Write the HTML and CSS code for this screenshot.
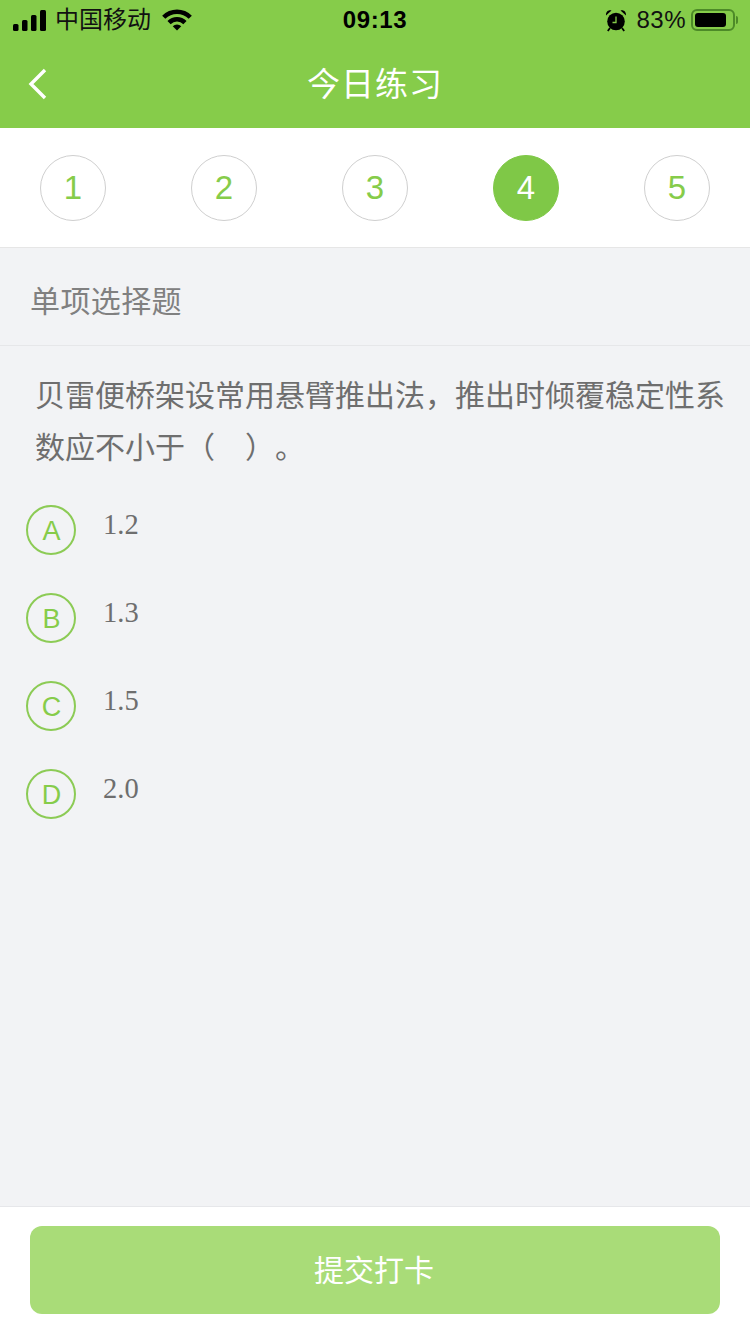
FILE: index.html
```
<!DOCTYPE html>
<html lang="zh">
<head>
<meta charset="utf-8">
<title>今日练习</title>
<link rel="stylesheet" href="styles.css">
</head>
<body>
<div class="page">
  <header class="top">
    <div class="status">
      <div class="status-left">
        <svg class="signal" width="33" height="21" viewBox="0 0 33 21"><rect x="0" y="14" width="5.500" height="7" rx="1.500"/><rect x="9" y="10" width="5.500" height="11" rx="1.500"/><rect x="18" y="5" width="5.500" height="16" rx="1.500"/><rect x="27" y="0" width="6" height="21" rx="1.500"/></svg>
        <span class="carrier">中国移动</span>
        <svg class="wifi" width="30" height="22" viewBox="0 0 30 22"><path d="M.15 6.650A21 21 0 0 1 29.850 6.650L26.670 9.830A16.500 16.500 0 0 0 3.330 9.830Z"/><path d="M5.450 11.950A13.500 13.500 0 0 1 24.550 11.950L21.360 15.140A9 9 0 0 0 8.640 15.140Z"/><path d="M10.760 17.260A6 6 0 0 1 19.240 17.260L15 21.500Z"/></svg>
      </div>
      <span class="time">09:13</span>
      <div class="status-right">
        <svg class="alarm" width="22" height="23" viewBox="0 0 22 23"><circle cx="11" cy="12.500" r="8.800"/><path d="M1 6.500C.8 3 3 .6 6.500 1.500zM21 6.500C21.200 3 19 .6 15.500 1.500z"/><path d="M5 19l-2.200 3M17 19l2.200 3" stroke="#000" stroke-width="1.800" fill="none"/><path d="M11 7.500v6H7.500" stroke="#86cc4a" stroke-width="1.300" fill="none"/></svg>
        <span class="percent">83%</span>
        <div class="battery"><div class="battery-fill"></div></div>
        <div class="battery-cap"></div>
      </div>
    </div>
    <div class="nav">
      <svg class="back" width="20" height="32" viewBox="0 0 20 32"><path d="M17 2L3 16l14 14" fill="none" stroke="#fff" stroke-width="3.400"/></svg>
      <h1 class="title">今日练习</h1>
    </div>
  </header>

  <nav class="steps">
    <span class="step">1</span>
    <span class="step">2</span>
    <span class="step">3</span>
    <span class="step step-on">4</span>
    <span class="step">5</span>
  </nav>

  <main class="body">
    <div class="kind">单项选择题</div>
    <p class="question">贝雷便桥架设常用悬臂推出法，推出时倾覆稳定性系数应不小于（　）。</p>
    <ul class="options">
      <li class="option"><span class="letter">A</span><span class="value">1.2</span></li>
      <li class="option"><span class="letter">B</span><span class="value">1.3</span></li>
      <li class="option"><span class="letter">C</span><span class="value">1.5</span></li>
      <li class="option"><span class="letter">D</span><span class="value">2.0</span></li>
    </ul>
  </main>

  <footer class="foot">
    <button class="submit" type="button">提交打卡</button>
  </footer>
</div>
</body>
</html>
```
FILE: styles.css
```
* { box-sizing: border-box; }
html, body { margin: 0; padding: 0; }
body { font-family: "Liberation Sans", "Noto Sans CJK SC", sans-serif; }
.page { width: 750px; height: 1334px; display: flex; flex-direction: column; background: #f2f3f5; overflow: hidden; }

.top { height: 128px; background: #86cc4a; display: flex; flex-direction: column; flex: none; }
.status { height: 40px; padding: 0 12px 0 13px; display: grid; grid-template-columns: 1fr auto 1fr; align-items: center; color: #000; }
.status-left { display: flex; align-items: center; }
.status-right { display: flex; align-items: center; justify-content: flex-end; }
.signal { flex: none; }
.carrier { font-size: 24px; line-height: 40px; margin-left: 9px; color: #111; }
.wifi { margin-left: 11px; }
.time { font-size: 24px; font-weight: 700; letter-spacing: 0.6px; margin-left: -1px; }
.alarm { margin-right: 9px; }
.percent { font-size: 24px; letter-spacing: 0.5px; color: #111; }
.battery { width: 44px; height: 22px; border: 2px solid #4d8a28; border-radius: 6px; padding: 2px; margin-left: 5px; }
.battery-fill { width: 31px; height: 14px; background: #000; border-radius: 3px; }
.battery-cap { width: 2px; height: 8px; margin-left: 1px; background: #4d8a28; border-radius: 0 2px 2px 0; }

.nav { flex: 1; display: flex; align-items: center; justify-content: center; position: relative; padding-bottom: 4px; }
.back { position: absolute; left: 28px; top: 28px; }
.title { margin: 0; font-size: 33px; font-weight: 400; color: #fff; letter-spacing: 1px; }

.steps { height: 120px; flex: none; background: #fff; border-bottom: 1px solid #e6e6e6; padding: 0 40px; display: flex; align-items: center; justify-content: space-between; }
.step { width: 66px; height: 66px; border-radius: 50%; border: 1px solid #cfcfcf; color: #86cc4a; font-size: 33px; display: flex; align-items: center; justify-content: center; }
.step-on { background: #7fc847; border-color: #7fc847; color: #fff; }

.body { flex: 1; }
.kind { height: 98px; padding: 5px 30px 0; border-bottom: 1px solid #e6e7e9; display: flex; align-items: center; font-size: 30px; letter-spacing: 0.4px; color: #808080; }
.question { margin: 0; padding: 24px 20px 0 35px; font-size: 30px; line-height: 52px; color: #6e6e6e; text-spacing-trim: space-all; }
.options { list-style: none; margin: 0; padding: 31px 0 0 26px; display: flex; flex-direction: column; gap: 38px; }
.option { display: flex; height: 50px; }
.letter { width: 50px; height: 50px; border: 2px solid #8ccb55; border-radius: 50%; color: #86cc4a; font-size: 27px; padding: 3px 0 0 1px; display: flex; align-items: center; justify-content: center; flex: none; }
.value { margin-left: 27px; margin-top: -5px; font-family: "Liberation Serif", serif; font-size: 28.500px; line-height: 50px; color: #6e6e6e; }

.foot { flex: none; height: 128px; background: #fff; border-top: 1px solid #e6e7ea; padding: 19px 30px 0; }
.submit { width: 690px; height: 88px; border: 0; border-radius: 12px; background: #a9dc78; color: #fff; font: inherit; font-size: 30px; padding: 0 2px 4px 0; }
```
